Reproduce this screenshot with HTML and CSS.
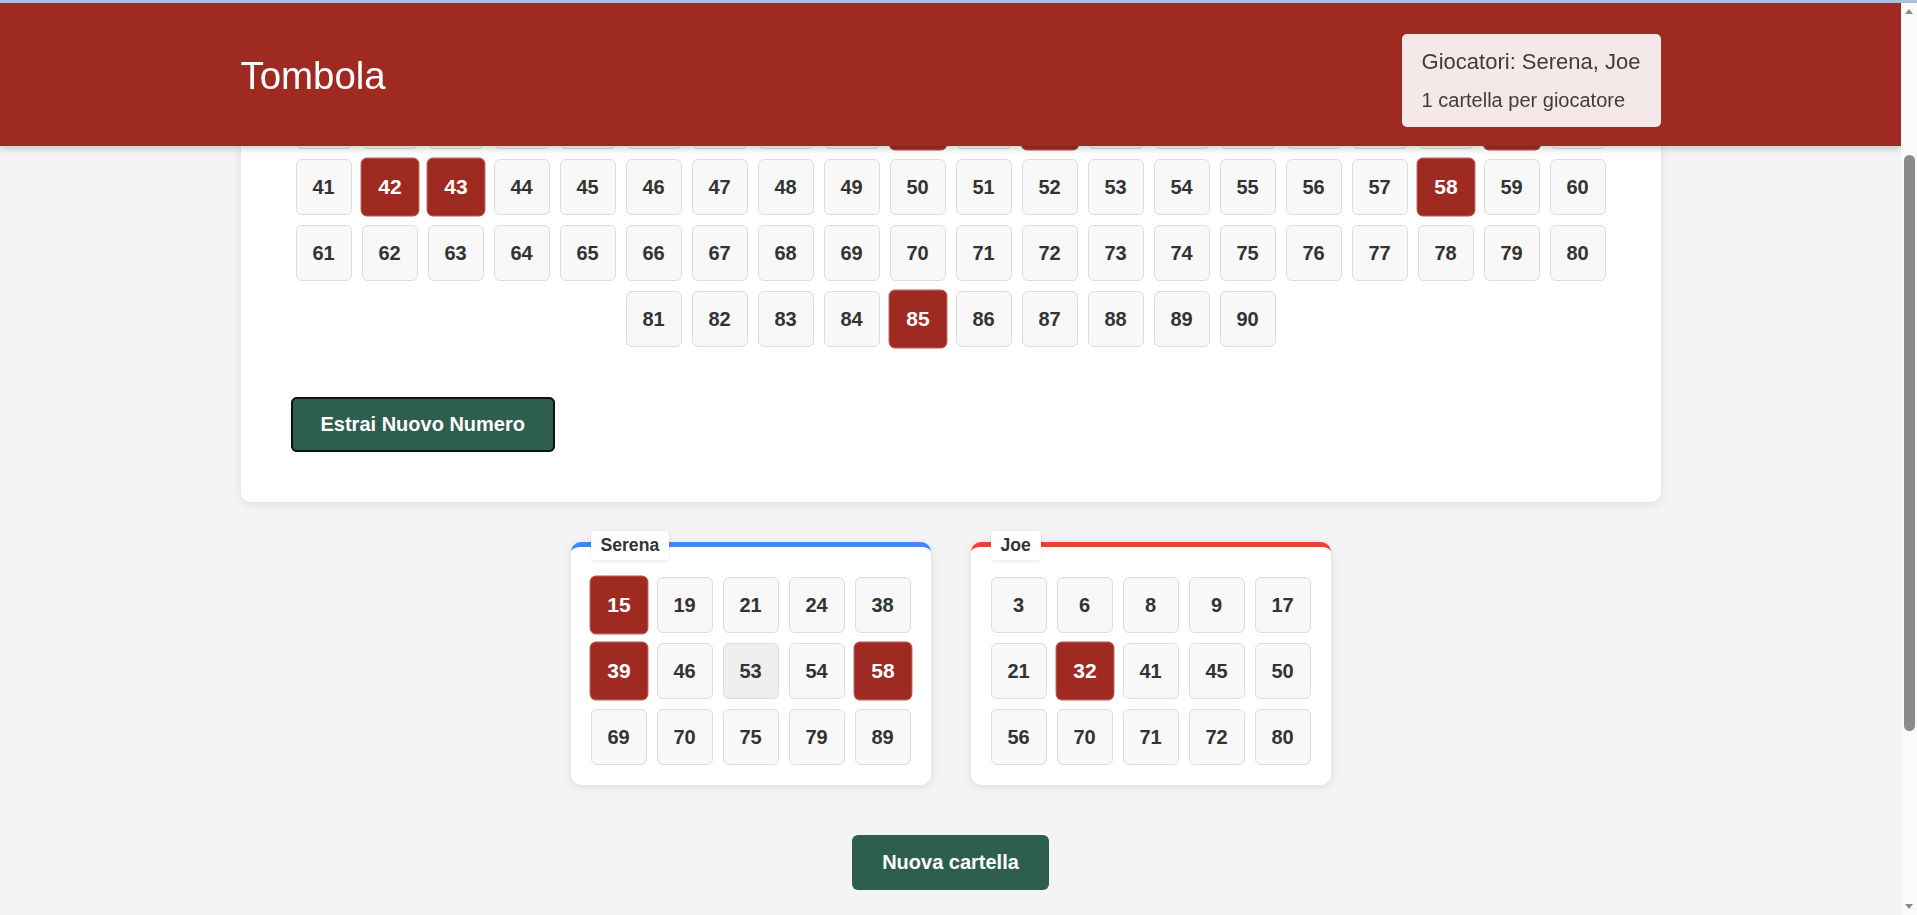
FILE: index.html
```html
<!DOCTYPE html>
<html lang="it">
<head>
<meta charset="utf-8">
<title>Tombola</title>
<link rel="stylesheet" href="styles.css">
</head>
<body>
<div class="topline"></div>
<div class="fake-scrollbar" aria-hidden="true">
  <span class="sb-arrow sb-up"></span>
  <span class="sb-thumb"></span>
  <span class="sb-arrow sb-down"></span>
</div>
<header class="site-header">
  <div class="header-inner">
    <h1 class="title">Tombola</h1>
    <div class="info-box">
      <p class="info-players">Giocatori: Serena, Joe</p>
      <p class="info-cards">1 cartella per giocatore</p>
    </div>
  </div>
</header>

<main class="page">
  <section class="board">
    <div class="number-grid">
      <div class="cell">1</div><div class="cell">2</div><div class="cell">3</div><div class="cell">4</div><div class="cell">5</div><div class="cell">6</div><div class="cell">7</div><div class="cell">8</div><div class="cell">9</div><div class="cell">10</div>
      <div class="cell">11</div><div class="cell">12</div><div class="cell">13</div><div class="cell">14</div><div class="cell marked">15</div><div class="cell">16</div><div class="cell">17</div><div class="cell">18</div><div class="cell">19</div><div class="cell">20</div>
      <div class="cell">21</div><div class="cell">22</div><div class="cell">23</div><div class="cell">24</div><div class="cell">25</div><div class="cell">26</div><div class="cell">27</div><div class="cell">28</div><div class="cell">29</div><div class="cell marked">30</div>
      <div class="cell">31</div><div class="cell marked">32</div><div class="cell">33</div><div class="cell">34</div><div class="cell">35</div><div class="cell">36</div><div class="cell">37</div><div class="cell">38</div><div class="cell marked">39</div><div class="cell">40</div>
      <div class="cell">41</div><div class="cell marked">42</div><div class="cell marked">43</div><div class="cell">44</div><div class="cell">45</div><div class="cell">46</div><div class="cell">47</div><div class="cell">48</div><div class="cell">49</div><div class="cell">50</div>
      <div class="cell">51</div><div class="cell">52</div><div class="cell">53</div><div class="cell">54</div><div class="cell">55</div><div class="cell">56</div><div class="cell">57</div><div class="cell marked">58</div><div class="cell">59</div><div class="cell">60</div>
      <div class="cell">61</div><div class="cell">62</div><div class="cell">63</div><div class="cell">64</div><div class="cell">65</div><div class="cell">66</div><div class="cell">67</div><div class="cell">68</div><div class="cell">69</div><div class="cell">70</div>
      <div class="cell">71</div><div class="cell">72</div><div class="cell">73</div><div class="cell">74</div><div class="cell">75</div><div class="cell">76</div><div class="cell">77</div><div class="cell">78</div><div class="cell">79</div><div class="cell">80</div>
      <div class="cell">81</div><div class="cell">82</div><div class="cell">83</div><div class="cell">84</div><div class="cell marked">85</div><div class="cell">86</div><div class="cell">87</div><div class="cell">88</div><div class="cell">89</div><div class="cell">90</div>
    </div>
    <div class="board-actions">
      <button class="btn btn-focused" type="button">Estrai Nuovo Numero</button>
    </div>
  </section>

  <section class="players">
    <div class="player-card player-blue">
      <span class="player-tag">Serena</span>
      <div class="card-grid">
        <div class="cell marked">15</div><div class="cell">19</div><div class="cell">21</div><div class="cell">24</div><div class="cell">38</div>
        <div class="cell marked">39</div><div class="cell">46</div><div class="cell hover">53</div><div class="cell">54</div><div class="cell marked">58</div>
        <div class="cell">69</div><div class="cell">70</div><div class="cell">75</div><div class="cell">79</div><div class="cell">89</div>
      </div>
    </div>
    <div class="player-card player-red">
      <span class="player-tag">Joe</span>
      <div class="card-grid">
        <div class="cell">3</div><div class="cell">6</div><div class="cell">8</div><div class="cell">9</div><div class="cell">17</div>
        <div class="cell">21</div><div class="cell marked">32</div><div class="cell">41</div><div class="cell">45</div><div class="cell">50</div>
        <div class="cell">56</div><div class="cell">70</div><div class="cell">71</div><div class="cell">72</div><div class="cell">80</div>
      </div>
    </div>
  </section>

  <div class="page-actions">
    <button class="btn" type="button">Nuova cartella</button>
  </div>
</main>
<script src="script.js"></script>
</body>
</html>
```

FILE: styles.css
```css
html {
  background: #f4f4f4;
}

body {
  margin: 0;
  padding-right: 16px;
  font-family: "Liberation Sans", Arial, sans-serif;
  color: #333;
  background: #f4f4f4;
}

.topline {
  position: fixed;
  top: 0;
  left: 0;
  right: 0;
  height: 3px;
  background: #aebfdb;
  z-index: 20;
}

.fake-scrollbar {
  position: fixed;
  top: 3px;
  right: 0;
  bottom: 0;
  width: 16px;
  background: #fafafa;
  z-index: 15;
}

.sb-arrow {
  position: absolute;
  left: 4px;
  width: 0;
  height: 0;
  border-left: 4px solid transparent;
  border-right: 4px solid transparent;
}

.sb-up {
  top: 6px;
  border-bottom: 5px solid #8b8b8b;
}

.sb-down {
  bottom: 6px;
  border-top: 5px solid #8b8b8b;
}

.sb-thumb {
  position: absolute;
  top: 152px;
  left: 3px;
  width: 11px;
  height: 576px;
  border-radius: 6px;
  background: #8b8b8b;
}

.site-header {
  position: fixed;
  top: 3px;
  left: 0;
  right: 16px;
  z-index: 10;
  background: #9e2a22;
  box-shadow: 0 2px 8px rgba(0, 0, 0, 0.22);
  padding: 31px 0 19px;
}

.header-inner {
  width: 1420px;
  margin: 0 auto;
  display: flex;
  justify-content: space-between;
  align-items: center;
}

.title {
  margin: 0 0 9px;
  font-size: 38.4px;
  font-weight: normal;
  color: #fff;
}

.info-box {
  background: #f5e8e8;
  border-radius: 5px;
  padding: 15px 20px 15px;
  color: #3d3d3d;
  display: flex;
  flex-direction: column;
  gap: 14px;
}

.info-box p {
  margin: 0;
}

.info-players {
  font-size: 22px;
}

.info-cards {
  font-size: 20px;
}

.page {
  width: 1420px;
  margin: 0 auto;
  padding: 191px 0 291px;
}

.board {
  background: #fff;
  border-radius: 10px;
  box-shadow: 0 2px 10px rgba(0, 0, 0, 0.1);
  padding: 50px;
}

.number-grid {
  display: flex;
  flex-wrap: wrap;
  justify-content: center;
  gap: 10px;
}

.cell {
  box-sizing: border-box;
  width: 56px;
  height: 56px;
  display: flex;
  align-items: center;
  justify-content: center;
  background: #f8f8f8;
  border: 1px solid #dcdcdc;
  border-radius: 6px;
  font-size: 20px;
  font-weight: bold;
  color: #333;
}

.cell.marked {
  background: #9e2a22;
  border-color: #b8504a;
  color: #fff;
  transform: scale(1.05);
}

.cell.hover {
  background: #efefef;
}

.board-actions {
  margin-top: 50px;
  display: flex;
}

.btn {
  font-family: "Liberation Sans", Arial, sans-serif;
  font-size: 20px;
  font-weight: bold;
  line-height: 23px;
  color: #fff;
  background: #2e5e4e;
  border: none;
  border-radius: 6px;
  padding: 16px 30px;
  cursor: pointer;
}

.btn-focused {
  box-shadow: inset 0 0 0 2px #111;
}

.players {
  margin-top: 40px;
  display: flex;
  justify-content: center;
  gap: 40px;
}

.player-card {
  position: relative;
  width: 360px;
  box-sizing: border-box;
  background: #fff;
  border-radius: 10px;
  border-top: 5px solid #4285f4;
  box-shadow: 0 2px 10px rgba(0, 0, 0, 0.1);
  padding: 30px 20px 20px;
}

.player-blue {
  border-top-color: #4285f4;
}

.player-red {
  border-top-color: #ea4335;
}

.player-tag {
  position: absolute;
  top: -16px;
  left: 20px;
  background: #fff;
  border-radius: 4px;
  box-shadow: 0 1px 4px rgba(0, 0, 0, 0.1);
  padding: 4px 10px 5px;
  font-size: 17.6px;
  line-height: 20px;
  font-weight: bold;
  color: #333;
}

.card-grid {
  display: grid;
  grid-template-columns: repeat(5, 56px);
  gap: 10px;
}

.page-actions {
  margin-top: 50px;
  display: flex;
  justify-content: center;
}
```

FILE: script.js
```js
window.scrollTo(0, 214);
```
